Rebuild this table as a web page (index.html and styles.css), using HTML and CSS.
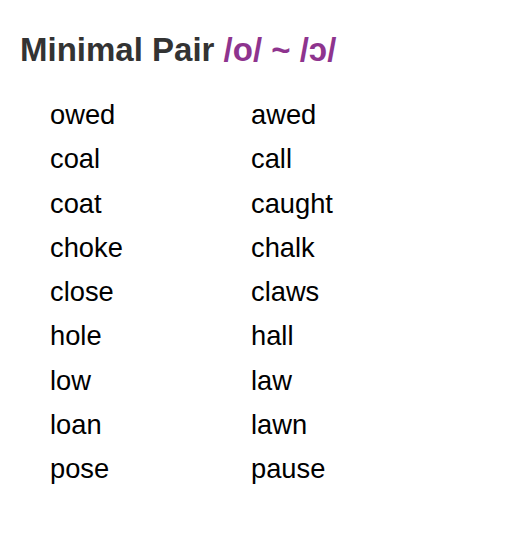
FILE: index.html
```html
<!DOCTYPE html>
<html>
<head>
<meta charset="utf-8">
<link rel="stylesheet" href="styles.css">
</head>
<body>
<div class="page">
  <h2 class="title">Minimal Pair <span class="ipa">/o/ ~ /ɔ/</span></h2>
  <div class="pairs">
    <div class="row"><span class="w1">owed</span><span class="w2">awed</span></div>
    <div class="row"><span class="w1">coal</span><span class="w2">call</span></div>
    <div class="row"><span class="w1">coat</span><span class="w2">caught</span></div>
    <div class="row"><span class="w1">choke</span><span class="w2">chalk</span></div>
    <div class="row"><span class="w1">close</span><span class="w2">claws</span></div>
    <div class="row"><span class="w1">hole</span><span class="w2">hall</span></div>
    <div class="row"><span class="w1">low</span><span class="w2">law</span></div>
    <div class="row"><span class="w1">loan</span><span class="w2">lawn</span></div>
    <div class="row"><span class="w1">pose</span><span class="w2">pause</span></div>
  </div>
</div>
</body>
</html>
```
FILE: styles.css
```css
html, body {
  margin: 0;
  padding: 0;
  background: #fff;
}
.page {
  padding: 28px 20px 0 20px;
  font-family: "Liberation Sans", Arial, sans-serif;
}
.title {
  margin: 0;
  font-size: 33px;
  font-weight: bold;
  line-height: 44px;
  color: #333333;
}
.ipa {
  color: #8e348e;
}
.pairs {
  margin-top: 21px;
  padding-left: 30px;
  display: flex;
  flex-direction: column;
}
.row {
  display: grid;
  grid-template-columns: 201px auto;
  height: 44.3px;
  line-height: 44px;
  font-size: 27.3px;
  color: #000;
}
```
